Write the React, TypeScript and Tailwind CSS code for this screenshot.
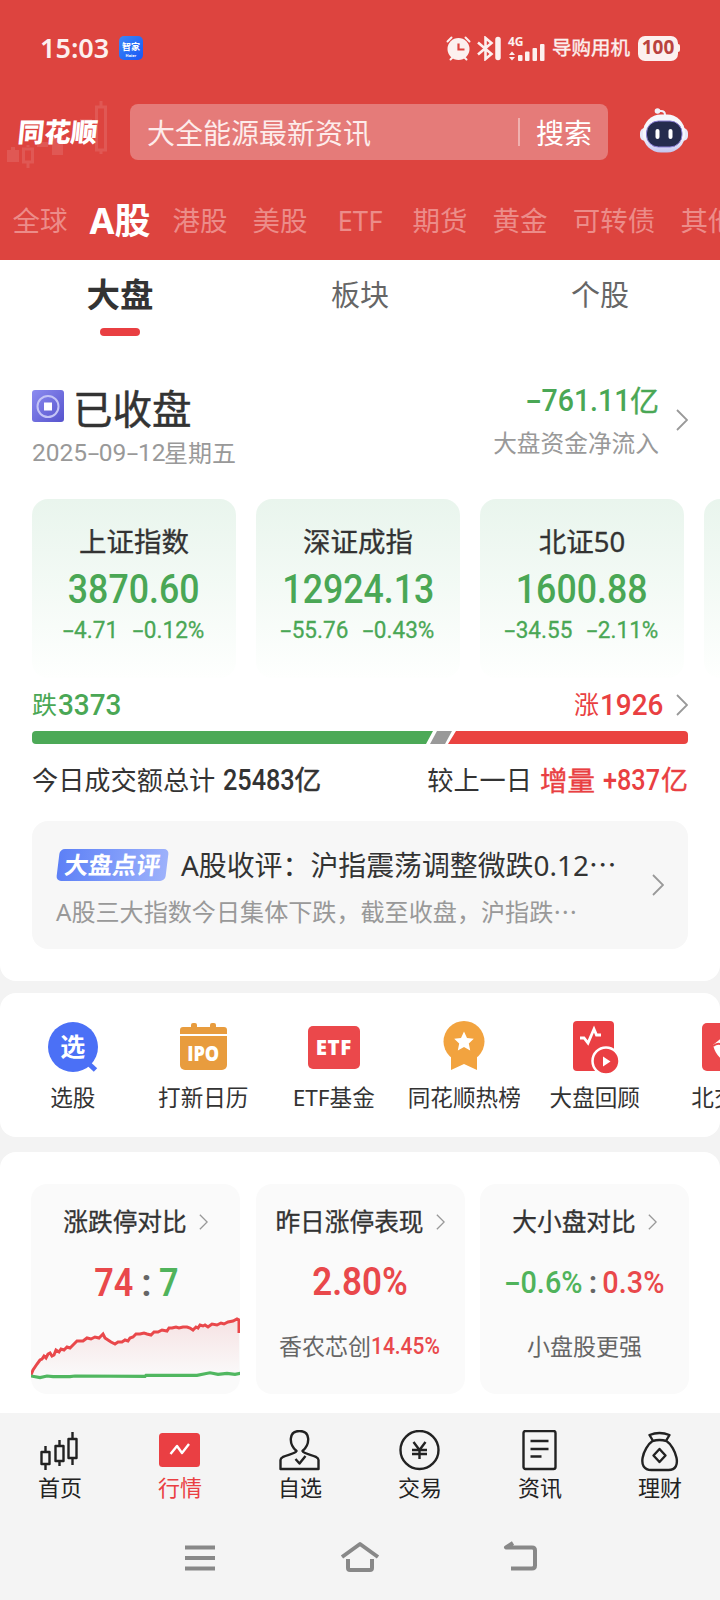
import React from "react";

const CJK = "font-['Noto_Sans','Noto_Sans_CJK_SC',sans-serif]";
const NUM = "inline-block whitespace-nowrap font-['Roboto','Noto_Sans_CJK_SC',sans-serif]";

function Num({ t, className = "" }: { t: string; className?: string }) {
  return (
    <span className={`${NUM} ${className}`}>
      {t.split("").map((c, i) =>
        c === "-" ? (
          <span key={i} className="mx-[0.1em] inline-block scale-x-[1.7]">-</span>
        ) : (
          <React.Fragment key={i}>{c}</React.Fragment>
        )
      )}
    </span>
  );
}

function Chevron({ className = "" }: { className?: string }) {
  return (
    <svg viewBox="0 0 12 22" fill="none" stroke="#999" strokeWidth="1.8" className={className}>
      <path d="M1 1l10 10L1 21" />
    </svg>
  );
}

function StatusBar() {
  return (
    <div className="flex h-24 items-center pl-10 pr-10 text-[#fcf0ef]">
      <span className="w-[79px] pb-[2px] text-[27px] font-semibold leading-none">15:03</span>
      <div className="flex h-6 w-6 flex-col items-center rounded-[5px] bg-gradient-to-br from-[#3d86f6] to-[#1a55f5] pt-[6px] text-white">
        <span className="text-[9px] font-bold leading-[10px]">智家</span>
        <span className="text-[4px] font-bold leading-[7px]">Haier</span>
      </div>
      <div className="ml-auto flex items-center">
        <svg width="25" height="25" viewBox="0 0 25 25" className="mr-[6px]">
          <circle cx="12.5" cy="13" r="11" fill="#fcf0ef" />
          <path d="M1.5 5.5l4-4M23.5 5.5l-4-4M4.5 23.5l3-3M20.5 23.5l-3-3" stroke="#fcf0ef" strokeWidth="2" strokeLinecap="round" />
          <path d="M12.5 7.5v6h6" fill="none" stroke="#dd443f" strokeWidth="2.2" />
        </svg>
        <svg width="25" height="25" viewBox="0 0 25 25" className="mr-[6px]" fill="none" stroke="#fcf0ef" strokeWidth="2.6">
          <path d="M1 6.5l13.5 11.5-6 5V2l6 5L1 18.5" />
          <path d="M21 3.5v18" strokeWidth="5.5" strokeLinecap="round" />
        </svg>
        <div className="mr-2 flex h-[25px] w-9 flex-col">
          <span className="h-[11px] text-[12px] font-bold leading-[11px]">4G</span>
          <svg width="37" height="25" viewBox="0 0 37 25" className="-mt-[11px]" fill="#fcf0ef">
            <path d="M1 19l3-3.5L7 19zM1 21h6l-3 3.5z" />
            <rect x="10" y="19" width="4.500" height="6" rx="1" />
            <rect x="17" y="15.5" width="4.500" height="9.5" rx="1" />
            <rect x="24.5" y="12" width="4.500" height="13" rx="1" />
            <rect x="32" y="8" width="4.500" height="17" rx="1" />
          </svg>
        </div>
        <span className="mr-2 text-[19.5px] leading-none [-webkit-text-stroke:0.4px]">导购用机</span>
        <div className="flex h-[25px] w-[40px] items-center justify-center rounded-[7px] bg-[#fcf0ef] pb-px text-[19px] font-bold leading-none text-[#b9423e]">100</div>
        <div className="h-2 w-[2px] rounded-r bg-[#fcf0ef]" />
      </div>
    </div>
  );
}

function Logo() {
  return (
    <div className="relative h-[72px] w-[130px]">
      <svg className="absolute inset-0" width="130" height="72" viewBox="0 0 130 72">
        <g fill="#fff" fillOpacity="0.11">
          <path d="M7 54h4v-3h4v3h4v12H7zM37 46h11v5H37zM52 42h11v17H52zM80 23h12v6H80z" />
        </g>
        <g fill="none" stroke="#fff" strokeOpacity="0.11" strokeWidth="3">
          <path d="M23.5 53h9v13h-9zM28 51v-2M28 66v6M96.5 11h9v43h-9zM101 11V5M101 54v4" />
        </g>
      </svg>
      <span className="absolute left-[18px] top-[22px] origin-left -skew-x-[6deg] whitespace-nowrap text-[26.5px] font-black leading-[28px] text-white">同花顺</span>
    </div>
  );
}

function Robot() {
  return (
    <svg width="48" height="46" viewBox="0 0 48 46">
      <defs>
        <linearGradient id="shell" x1="0" y1="0" x2="0" y2="1">
          <stop offset="0.6" stopColor="#f6f7fc" />
          <stop offset="1" stopColor="#c3c4ef" />
        </linearGradient>
      </defs>
      <path d="M18 3h3q4 0 4 4" fill="none" stroke="#f1f1fa" strokeWidth="2" />
      <circle cx="17.5" cy="3" r="2.8" fill="#f1f1fa" />
      <rect x="0" y="20" width="48" height="13" rx="5" fill="#e7e8f8" />
      <rect x="3" y="6.5" width="42" height="38" rx="18" fill="url(#shell)" />
      <rect x="6.5" y="13" width="35.5" height="26" rx="12" fill="#252c4d" stroke="#8b7fd6" strokeWidth="1" />
      <rect x="15.5" y="21" width="4" height="10" rx="2" fill="#fff" />
      <rect x="28.5" y="21" width="4" height="10" rx="2" fill="#fff" />
    </svg>
  );
}

const markets = ["全球", "A股", "港股", "美股", "ETF", "期货", "黄金", "可转债", "其他"];

function Header() {
  return (
    <header className="flex h-[260px] flex-col overflow-hidden bg-[#dd443f]">
      <StatusBar />
      <div className="flex h-[72px] items-center">
        <Logo />
        <div className="flex h-14 w-[478px] items-center rounded-lg bg-[#e57b79] pl-[17px]">
          <span className="pt-[2px] text-[28px] leading-none text-[#fdeceb]">大全能源最新资讯</span>
          <div className="ml-auto h-7 w-[2px] bg-[#f0b1af]" />
          <span className="ml-4 mr-4 pt-px text-[28px] leading-none text-white">搜索</span>
        </div>
        <div className="ml-8 pb-[2px]"><Robot /></div>
      </div>
      <nav className="flex h-[92px] items-center pt-[14px]">
        {markets.map((m) => (
          <span
            key={m}
            className={`flex shrink-0 justify-center whitespace-nowrap leading-none ${m === "可转债" ? "w-[108px]" : "w-20"} ${
              m === "A股" ? "text-[36px] font-bold text-white" : "text-[27.5px] text-[#ec8c89]"
            }`}
          >
            {m}
          </span>
        ))}
      </nav>
    </header>
  );
}

const indices = [
  ["上证指数", "3870.60", "-4.71", "-0.12%"],
  ["深证成指", "12924.13", "-55.76", "-0.43%"],
  ["北证50", "1600.88", "-34.55", "-2.11%"],
  ["", "", "", ""],
];

function IndexCards() {
  return (
    <div className="mt-[29px] flex gap-5 overflow-hidden pl-8">
      {indices.map(([n, v, d, p], i) => (
        <div key={i} className="flex h-[179px] w-[204px] shrink-0 flex-col items-center rounded-2xl bg-gradient-to-b from-[#e9f5ed] to-[#fefffe] pt-[25px] text-[#4aa755]">
          <span className="h-9 text-[27.5px] leading-9 text-[#333] [-webkit-text-stroke:0.3px]">{n}</span>
          <div className="mt-[5px] flex h-12 items-center"><Num t={v} className="scale-x-[0.87] text-[41px] font-medium leading-none" /></div>
          <div className="mt-[3px] flex h-7 items-center gap-[9px]">
            <Num t={d} className="scale-x-[0.92] text-[24.5px] leading-7 [-webkit-text-stroke:0.3px]" />
            <Num t={p} className="scale-x-[0.92] text-[24.5px] leading-7 [-webkit-text-stroke:0.3px]" />
          </div>
        </div>
      ))}
    </div>
  );
}

function Overview() {
  return (
    <section className="h-[721px] rounded-b-2xl bg-white">
      <div className="grid h-[86px] grid-cols-3 text-center">
        <div className="flex flex-col items-center">
          <span className="h-[68px] text-[33.5px] font-bold leading-[68px] text-[#333]">大盘</span>
          <div className="h-2 w-10 rounded-full bg-[#e93f42]" />
        </div>
        <span className="text-[29px] leading-[70px] text-[#666]">板块</span>
        <span className="text-[29px] leading-[70px] text-[#666]">个股</span>
      </div>
      <div className="flex h-[124px] items-center px-8 pt-[36px]">
        <div>
          <div className="flex h-12 items-center">
            <svg width="32" height="32" viewBox="0 0 32 32">
              <defs>
                <linearGradient id="closed" x1="0" y1="0" x2="1" y2="1">
                  <stop stopColor="#8c8cf0" /><stop offset="1" stopColor="#5653cd" />
                </linearGradient>
              </defs>
              <rect width="32" height="32" rx="3" fill="url(#closed)" />
              <circle cx="16" cy="16.5" r="10.5" fill="none" stroke="#c4c4f6" strokeWidth="2" />
              <rect x="12" y="12.5" width="8" height="8" fill="#fff" />
            </svg>
            <span className="ml-[9px] pt-[7px] text-[39.5px] leading-none text-[#333] [-webkit-text-stroke:0.5px]">已收盘</span>
          </div>
          <div className="flex h-10 items-center pt-[6px] text-[24px] leading-none text-[#999]">
            <Num t="2025-09-12" className="w-[132px] origin-left text-[24.5px]" />
            <span>星期五</span>
          </div>
        </div>
        <div className="ml-auto flex flex-col items-end pb-2 pr-[17px]">
          <div className="flex h-11 items-center leading-none text-[#4aa755]">
            <Num t="-761.11" className="origin-right scale-x-[0.92] text-[31px] font-medium" />
            <span className="text-[29px] [-webkit-text-stroke:0.4px]">亿</span>
          </div>
          <span className="h-11 text-[23.7px] leading-[43px] text-[#999]">大盘资金净流入</span>
        </div>
        <Chevron className="mb-3 h-[22px] w-3" />
      </div>
      <IndexCards />
      <div className="flex h-[53px] items-center px-8 text-[25px]">
        <span className="text-[#4aa755]">跌</span>
        <Num t="3373" className="ml-px origin-left scale-x-[0.93] text-[30px] font-medium text-[#4aa755]" />
        <span className="ml-auto text-[#e93f42]">涨</span>
        <Num t="1926" className="ml-px w-[64px] origin-left scale-x-[0.93] text-[30px] font-medium text-[#e93f42]" />
        <Chevron className="ml-[12px] h-[22px] w-3" />
      </div>
      <svg className="mx-8 block" width="656" height="13" viewBox="0 0 656 13">
        <path d="M4 0h397l-7 13H4a4 4 0 0 1-4-4V4a4 4 0 0 1 4-4z" fill="#4ca957" />
        <path d="M405 0h15l-7 13h-15z" fill="#999" />
        <path d="M424 0h228a4 4 0 0 1 4 4v5a4 4 0 0 1-4 4H416z" fill="#ea4340" />
      </svg>
      <div className="flex h-[77px] items-center px-8 pb-1 text-[26.2px] text-[#333]">
        <span>今日成交额总计</span>
        <Num t="25483" className="ml-2 w-[71px] origin-left scale-x-[0.87] text-[29px] font-medium" />
        <span className="text-[27px] [-webkit-text-stroke:0.5px]">亿</span>
        <span className="ml-auto">较上一日</span>
        <span className="ml-2 text-[27.5px] text-[#e93f42] [-webkit-text-stroke:0.4px]">增量</span>
        <Num t="+837" className="ml-2 w-[58px] origin-left scale-x-[0.87] text-[29px] font-medium text-[#e93f42]" />
        <span className="text-[27px] text-[#e93f42] [-webkit-text-stroke:0.4px]">亿</span>
      </div>
      <div className="mx-8 flex h-32 items-center rounded-2xl bg-[#f7f7f7] px-6">
        <div className="flex-1 pt-[6px]">
          <div className="flex h-11 items-center">
            <div className="ml-[2px] flex h-8 w-[109px] -skew-x-[7deg] items-center justify-center rounded-[5px] bg-gradient-to-r from-[#5d80f6] to-[#9db1fb] text-[24px] font-bold leading-none text-white">大盘点评</div>
            <span className="ml-[14px] whitespace-nowrap pt-[2px] text-[27.9px] leading-none text-[#333]">A股收评：沪指震荡调整微跌0.12⋯</span>
          </div>
          <div className="mt-[3px] h-11 whitespace-nowrap text-[24.1px] leading-[44px] text-[#999]">A股三大指数今日集体下跌，截至收盘，沪指跌⋯</div>
        </div>
        <Chevron className="h-[22px] w-3 shrink-0" />
      </div>
    </section>
  );
}

const shortcuts: [string, React.ReactNode][] = [
  ["选股", (
    <div className="relative h-[52px] w-[52px]">
      <svg width="52" height="52" viewBox="0 0 52 52" className="absolute inset-0">
        <circle cx="26" cy="26" r="25" fill="#4b70f6" />
        <path d="M42 43l6.5 6" stroke="#4b70f6" strokeWidth="5" />
      </svg>
      <span className="absolute inset-0 text-center text-[25px] font-bold leading-[51px] text-white">选</span>
    </div>
  )],
  ["打新日历", (
    <div className="flex h-[52px] w-[47px] flex-col pt-[2px]">
      <svg width="47" height="11" viewBox="0 0 47 11" fill="#e89c3e"><path d="M0 11V7q0-3 3-3h8V2q0-2 2-2h2q2 0 2 2v2h13V2q0-2 2-2h2q2 0 2 2v2h8q3 0 3 3v4z" /></svg>
      <div className="mt-[2px] flex h-[34px] items-center justify-center rounded-b-[5px] bg-[#e89c3e] text-white">
        <span className="scale-x-[0.88] font-['Open_Sans',sans-serif] text-[20.5px] font-extrabold leading-none">IPO</span>
      </div>
    </div>
  )],
  ["ETF基金", (
    <div className="flex h-[43px] w-[52px] items-center justify-center rounded-[5px] bg-[#eb484b] font-['Open_Sans',sans-serif] text-[20.5px] font-extrabold leading-none tracking-[0.5px] text-white">ETF</div>
  )],
  ["同花顺热榜", (
    <svg width="42" height="50" viewBox="0 0 42 50" className="-mt-[2px]">
      <circle cx="21" cy="20.5" r="20.5" fill="#f2a33f" />
      <path d="M8 34h26v15l-13-6-13 6z" fill="#f2a33f" />
      <path d="M21 10.5l3 6.5 6.8.7-5 4.7 1.4 7-6.2-3.5-6.2 3.5 1.4-7-5-4.7 6.800-.7z" fill="#fff" />
    </svg>
  )],
  ["大盘回顾", (
    <svg width="52" height="55" viewBox="0 0 52 55" className="mt-[1px]">
      <rect x="4" y="1" width="41" height="50" rx="4" fill="#ea3f43" />
      <path d="M11 18h4l4 5L25 9l2.5 6H32" fill="none" stroke="#fff" strokeWidth="2.8" />
      <circle cx="37" cy="41" r="13.500" fill="#ea3f43" stroke="#fff" strokeWidth="2.5" />
      <path d="M34 36.500l7.5 5-7.5 5z" fill="#fff" />
    </svg>
  )],
  ["北交所", (
    <svg width="46" height="48" viewBox="0 0 46 48">
      <rect width="46" height="48" rx="5" fill="#eb484b" />
      <path d="M23 12L11 22q3 12 12 16 9-4 12-16z" fill="#fff" />
      <path d="M11 23q5-4 9-1" fill="none" stroke="#eb484b" strokeWidth="2" />
    </svg>
  )],
];

function Shortcuts() {
  return (
    <section className="mt-3 flex h-36 overflow-hidden rounded-2xl bg-white pl-[7.5px] pt-[26px]">
      {shortcuts.map(([label, icon]) => (
        <div key={label} className="flex w-[130.5px] shrink-0 flex-col items-center">
          <div className="flex h-[56px] items-center justify-center">{icon}</div>
          <span className="mt-[7px] whitespace-nowrap text-[22.6px] leading-8 text-[#333]">{label}</span>
        </div>
      ))}
    </section>
  );
}

const redLine =
  "M0 65L2 60L4 57L6 54L9 50L11 49L13 46L15 48L17 44L19 43L21 46L23 45L25 40L28 42L30 39L33 40L36 37L39 38L42 35L46 31L49 31L52 31L56 28L60 29L64 27L68 28L70 26L72 24L74 28L77 30L80 32L84 34L87 32L91 32L94 30L97 31L99 28L102 27L105 24L109 24L113 23L116 24L120 25L123 22L127 22L131 20L136 21L138 18L141 18L145 17L148 18L152 17L156 17L159 18L162 20L165 17L167 18L169 15L172 16L174 15L177 17L181 14L186 15L190 13L193 14L197 12L202 11L206 9L208 10";

function Metrics() {
  const card = "flex h-[210px] w-[209px] flex-col items-center overflow-hidden rounded-2xl bg-[#fafafa] pt-5";
  const Title = ({ t }: { t: string }) => (
    <div className="flex h-9 items-center gap-3 whitespace-nowrap text-[24.7px] leading-none text-[#333] [-webkit-text-stroke:0.3px]">
      <span>{t}</span><Chevron className="h-4 w-[9px]" />
    </div>
  );
  return (
    <section className="mt-[15px] flex h-[261px] justify-between rounded-t-2xl bg-white px-[31px] pt-8">
      <div className={card}>
        <Title t="涨跌停对比" />
        <div className="flex h-[70px] items-center pt-4 text-[38px] leading-none">
          <Num t="74" className="scale-x-[0.9] font-semibold text-[#e9484b]" />
          <Num t=":" className="mx-[6px] font-semibold text-[#666]" />
          <Num t="7" className="scale-x-[0.9] font-semibold text-[#50b35b]" />
        </div>
        <svg width="209" height="84" viewBox="0 0 209 84" fill="none">
          <defs>
            <linearGradient id="rise" x1="0" y1="0" x2="0" y2="1">
              <stop stopColor="#f6e2e3" /><stop offset="1" stopColor="#fafafa" />
            </linearGradient>
          </defs>
          <path d={redLine + "V66H0z"} fill="url(#rise)" />
          <path d={redLine + "V23"} stroke="#e9484b" strokeWidth="3" />
          <path d="M0 66l9 1.500 7-1.500 6 .6h17l5-.6 70 .3 1-1h51l8-1.500 5-1 8 1.500 9-1 8 1 6-1 5 2" stroke="#50b760" strokeWidth="3.200" />
        </svg>
      </div>
      <div className={card}>
        <Title t="昨日涨停表现" />
        <div className="flex h-[70px] items-center pt-[14px]"><Num t="2.80%" className="scale-x-[0.92] text-[38px] font-semibold leading-none text-[#e9484b]" /></div>
        <div className="mt-[16px] flex h-10 items-center whitespace-nowrap text-[23px] leading-none text-[#666]">
          香农芯创<Num t="14.45%" className="w-[70px] origin-left scale-x-[0.91] font-medium text-[#e9484b]" />
        </div>
      </div>
      <div className={card}>
        <Title t="大小盘对比" />
        <div className="flex h-[70px] items-center justify-center pt-[14px] text-[31px] leading-none">
          <Num t="-0.6%" className="scale-x-[0.93] font-medium text-[#50b35b]" />
          <Num t=":" className="mx-[3px] font-semibold text-[#666]" />
          <Num t="0.3%" className="scale-x-[0.93] font-medium text-[#e9484b]" />
        </div>
        <div className="mt-[16px] flex h-10 items-center text-[23px] leading-none text-[#666]">小盘股更强</div>
      </div>
    </section>
  );
}

const tabs: [string, React.ReactNode][] = [
  ["首页", <path d="M2 22h8v12H2zM6 22v-6M6 34v6M16 16h8v15h-8zM20 16v-6M20 31v5M29 9h8v19h-8zM33 9V2M33 28v7" />],
  ["行情", <><rect x="-0.5" y="3" width="41" height="34" rx="3.5" fill="#ea3f43" stroke="none" /><path d="M11 24l6.5-8 5 7 7-9" stroke="#fff" /></>],
  ["自选", <><path d="M17 21c-8-7-8-20 3-20s11 13 3 20c2 4 16 4 16 9v9H1v-9c0-5 14-5 16-9z" /><path d="M16 29l4 4.5 6-7.5" /></>],
  ["交易", <><circle cx="20" cy="20" r="19" /><path d="M14 12l6 8 6-8M12.500 20h15M12.500 24h15M20 20v9" /></>],
  ["资讯", <><rect x="4" y="1" width="32" height="38" rx="2" /><path d="M11 11h18M11 19h18M11 26.500h11" /></>],
  ["理财", <><path d="M13 10l-3-5q10-4 20 0l-3 5M13 11q7-2 14 0C36 17 44 40 29 40H12C-4 40 4 17 13 11z" /><path d="M20 19l6 6.500-6 6.500-6-6.500z" /></>],
];

function BottomBar() {
  return (
    <footer className="h-[187px] bg-[#f4f4f4]">
      <div className="flex h-[102px] pt-[17px]">
        {tabs.map(([label, icon]) => (
          <div key={label} className={`flex w-[120px] flex-col items-center ${label === "行情" ? "text-[#ea3f43]" : "text-[#222]"}`}>
            <svg width="41" height="42" viewBox="-0.5 0 41 42" className="-ml-[1px]" fill="none" stroke="currentColor" strokeWidth="2.4" strokeLinejoin="round">{icon}</svg>
            <span className="-mt-px text-[22px] leading-8">{label}</span>
          </div>
        ))}
      </div>
      <div className="flex justify-center gap-[120px] pt-[26px]">
        {["M5 6.500h30M5 17h30M5 27.500h30", "M2 16L20 3l18 13M8 18v9q0 2 2 2h20q2 0 2-2v-9", "M13 2L6 6.500h26q3 0 3 3v15q0 3-3 3H11"].map((d) => (
          <svg key={d} width="40" height="34" viewBox="0 0 40 34" fill="none" stroke="#888" strokeWidth="4" strokeLinejoin="round"><path d={d} /></svg>
        ))}
      </div>
    </footer>
  );
}

export default function App() {
  return (
    <div className={`h-[1600px] w-[720px] overflow-hidden bg-[#f3f3f3] ${CJK}`} lang="zh-CN">
      <Header />
      <Overview />
      <Shortcuts />
      <Metrics />
      <BottomBar />
    </div>
  );
}
